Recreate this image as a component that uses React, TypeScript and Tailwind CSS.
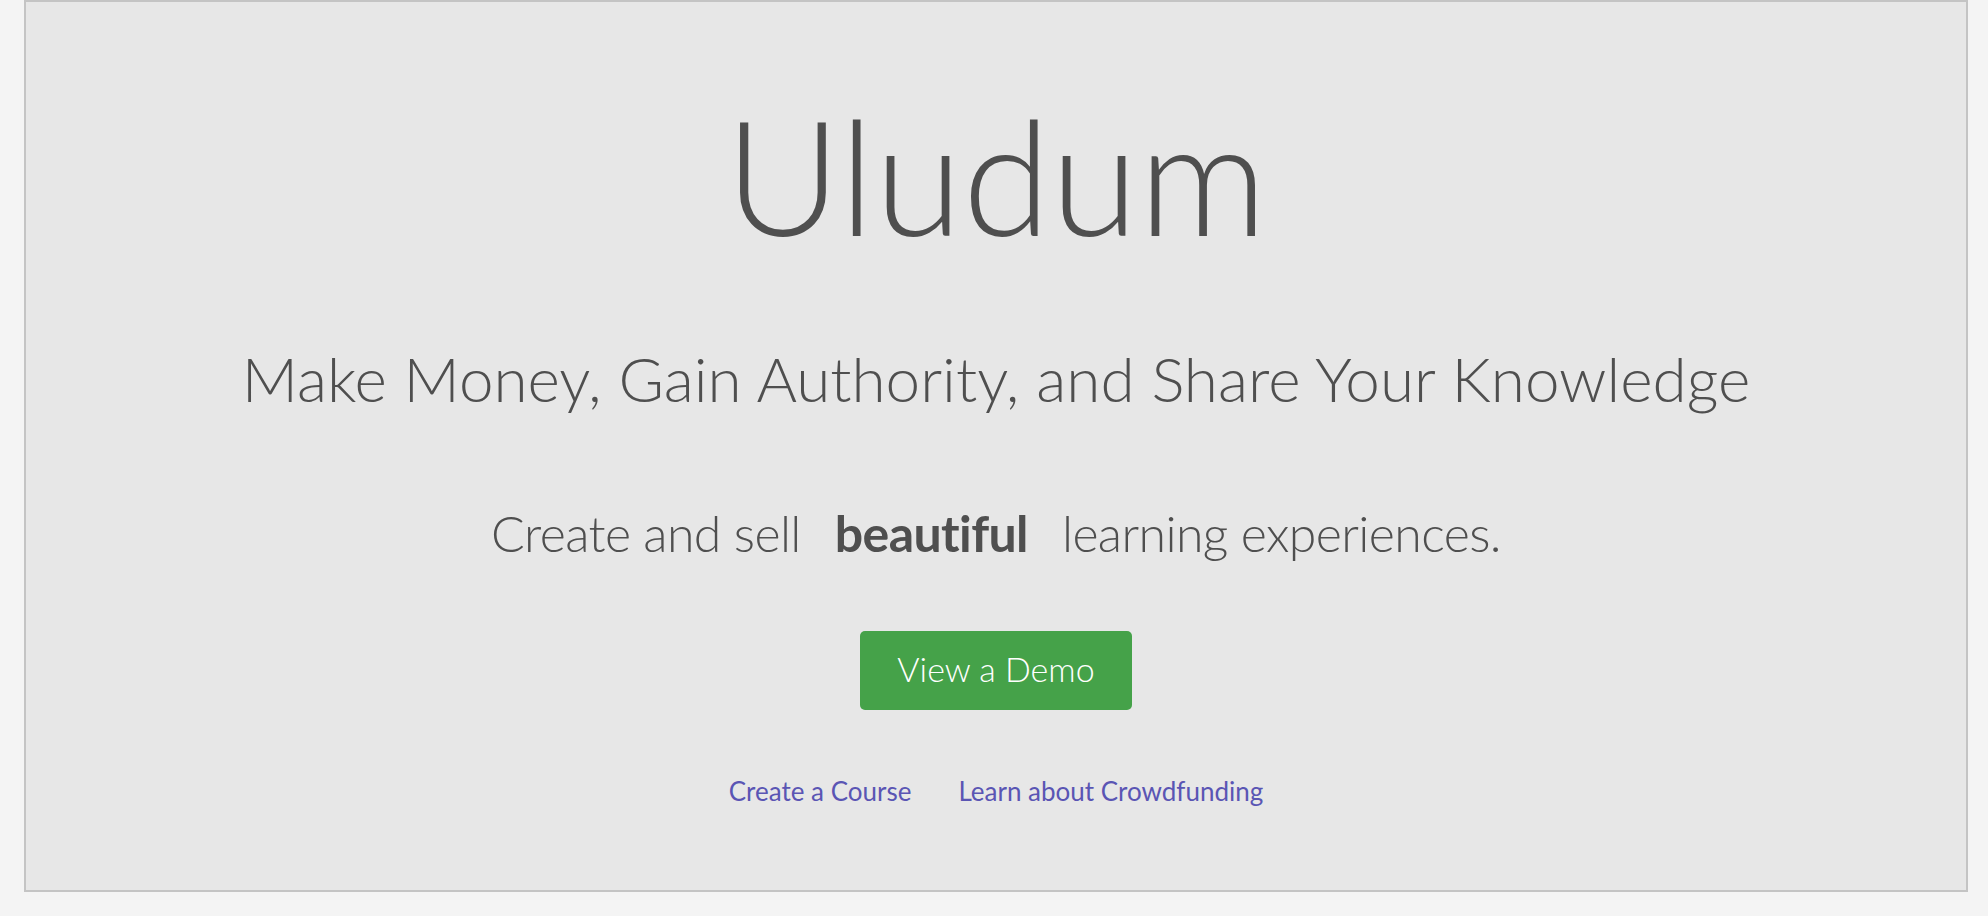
export default function App() {
  return (
    <div className="w-[1988px] h-[916px] bg-[#f4f4f4] overflow-hidden [font-variant-ligatures:none]" style={{ fontFamily: "Lato, 'Open Sans', sans-serif" }}>
      <div className="ml-[24px] w-[1944px] h-[892px] border-2 border-[#c4c4c4] bg-[#e7e7e7] flex flex-col items-center pt-[92px] text-[#4f4f4f]">
        <h1 className="text-[160px] leading-none font-light">Uludum</h1>
        <h2 className="mt-[93px] text-[62px] leading-none font-light">
          Make Money, Gain Authority, and Share Your Knowledge
        </h2>
        <p className="mt-[99px] text-[50px] leading-none font-light tracking-[-0.6px]">
          Create and sell<b className="font-bold mx-[34px]">beautiful</b>learning experiences.
        </p>
        <button className="mt-[73px] w-[272px] h-[79px] rounded-[5px] bg-[#45a249] text-white text-[34px] font-light leading-none pb-[3px]">
          View a Demo
        </button>
        <div className="mt-[68px] flex gap-[47px] text-[26px] leading-none text-[#5a55b4]">
          <a href="#">Create a Course</a>
          <a href="#">Learn about Crowdfunding</a>
        </div>
      </div>
    </div>
  );
}
